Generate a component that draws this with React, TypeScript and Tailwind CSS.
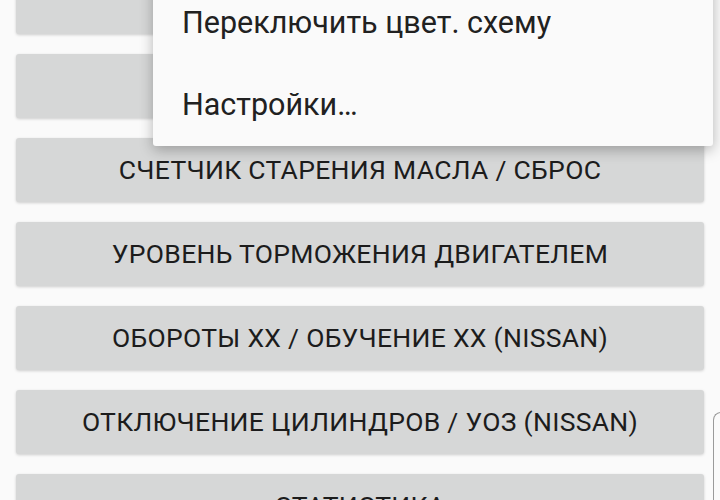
import React from "react";

const buttons = [
  "",
  "",
  "Счетчик старения масла / сброс",
  "Уровень торможения двигателем",
  "Обороты ХХ / обучение ХХ (Nissan)",
  "Отключение цилиндров / УОЗ (Nissan)",
  "Статистика",
];

export default function App() {
  return (
    <div
      className="relative w-[720px] h-[500px] overflow-hidden bg-[#fafafa]"
      style={{ fontFamily: "Roboto, 'Noto Sans', sans-serif" }}
    >
      <div className="flex flex-col gap-5 px-4 mt-[-30px]">
        {buttons.map((b, i) => (
          <div
            key={i}
            className="h-16 shrink-0 rounded-[3px] bg-[#d6d7d7] shadow-[0_1px_3px_rgba(0,0,0,0.18)] flex items-center justify-center text-[26.5px] leading-none uppercase text-[#1c1c1c] tracking-[0.3px]"
          >
            {b}
          </div>
        ))}
      </div>

      <div className="absolute left-[153px] top-[-18px] w-[560px] bg-[#fafafa] rounded-[3px] shadow-[0_4px_14px_rgba(0,0,0,0.28)] flex flex-col">
        <div className="h-[82px] flex items-center pl-[29px] text-[30.5px] leading-none text-[#212121]">
          Переключить цвет. схему
        </div>
        <div className="h-[82px] flex items-center pl-[29px] text-[30.5px] leading-none text-[#212121]">
          Настройки…
        </div>
      </div>

      <div className="absolute left-[713px] top-[412px] w-[40px] h-[120px] border-l border-t border-[#9a9a9a] rounded-tl-[8px] bg-[#fafafa]" />
    </div>
  );
}
